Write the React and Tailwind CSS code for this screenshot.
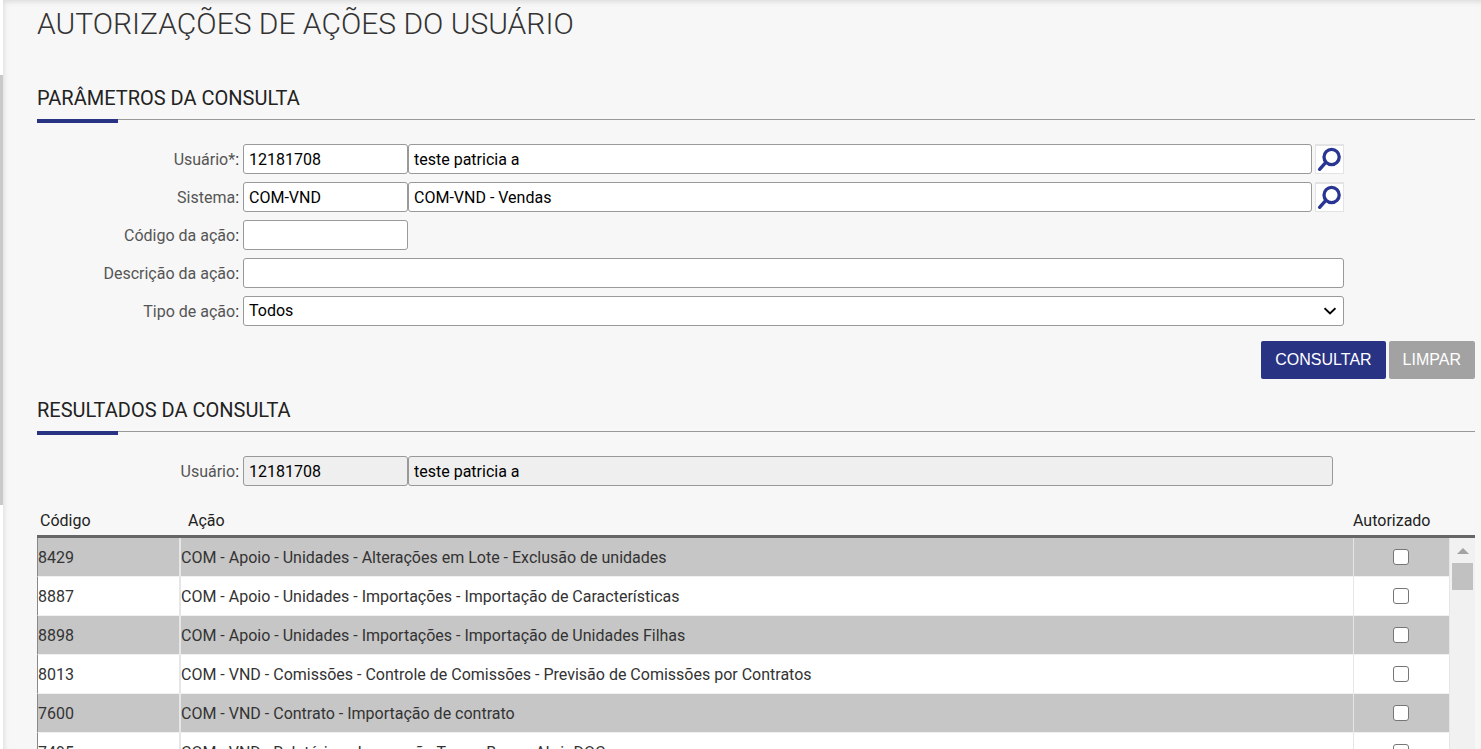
import { useState } from "react";

const INITIAL_QUERY = {
  userCode: "12181708",
  userName: "teste patricia a",
  systemCode: "COM-VND",
  systemName: "COM-VND - Vendas",
  actionCode: "",
  actionName: "",
  actionType: "Todos",
};

const EMPTY_QUERY = {
  userCode: "",
  userName: "",
  systemCode: "",
  systemName: "",
  actionCode: "",
  actionName: "",
  actionType: "Todos",
};

const ACTIONS = [
  { code: "8429", name: "COM - Apoio - Unidades - Alterações em Lote - Exclusão de unidades" },
  { code: "8887", name: "COM - Apoio - Unidades - Importações - Importação de Características" },
  { code: "8898", name: "COM - Apoio - Unidades - Importações - Importação de Unidades Filhas" },
  { code: "8013", name: "COM - VND - Comissões - Controle de Comissões - Previsão de Comissões por Contratos" },
  { code: "7600", name: "COM - VND - Contrato - Importação de contrato" },
  { code: "7495", name: "COM - VND - Relatórios - Impressão Termo Banco Abrir DOC" },
];

const inputClass =
  "h-[30px] min-w-0 rounded-[3px] border border-[#999] bg-white px-[5px] text-black outline-none focus:border-[#283384] disabled:bg-[#efefef]";

function SectionTitle({ children }) {
  return (
    <div className="border-b border-[#999]">
      <h2 className="text-xl leading-6 text-[#222]">{children}</h2>
      <div className="mt-[9px] -mb-1 h-1 w-[81px] bg-[#283384]" />
    </div>
  );
}

function FieldRow({ id, label, children }) {
  return (
    <div className="flex items-center">
      <label htmlFor={id} className="w-[202px] shrink-0 pt-[2px] text-right text-[#555]">
        {label}
        <span className="text-[#222]">:</span>
      </label>
      <div className="ml-1 flex min-w-0 flex-1">{children}</div>
    </div>
  );
}

function SearchButton({ label }) {
  return (
    <button
      type="button"
      aria-label={label}
      className="ml-[3px] flex h-[30px] w-[29px] shrink-0 items-center justify-center border border-t-2 border-[#e3e3e3] bg-white"
    >
      <svg width="25" height="25" viewBox="0 0 25 25" fill="none" stroke="#283593" strokeLinecap="round">
        <circle cx="14.6" cy="10" r="7.6" strokeWidth="3.3" />
        <path d="M8.6 15.7 L2.6 22.3" strokeWidth="3.4" />
      </svg>
    </button>
  );
}

export default function App() {
  const [query, setQuery] = useState(INITIAL_QUERY);
  const [authorized, setAuthorized] = useState([]);

  const bind = (field) => ({
    value: query[field],
    onChange: (e) => setQuery({ ...query, [field]: e.target.value }),
  });

  const toggle = (code) =>
    setAuthorized((list) => (list.includes(code) ? list.filter((c) => c !== code) : [...list, code]));

  return (
    <div className="flex h-screen overflow-hidden bg-white font-[Roboto,sans-serif] text-base leading-5">
      {/* Side menu scrollbar */}
      <div className="w-[3px] shrink-0 pt-[75px]">
        <div className="h-[430px] bg-[#c9c9c9]" />
      </div>

      <main className="min-w-0 flex-1 bg-[#f7f7f7] pl-[34px] pr-[6px] shadow-[inset_2px_3px_5px_-1px_#dcdcdc]">
        <h1 className="pt-1 text-3xl leading-10 font-light text-[#333]">AUTORIZAÇÕES DE AÇÕES DO USUÁRIO</h1>

        <form className="mt-[42px]" onSubmit={(e) => e.preventDefault()}>
          <SectionTitle>PARÂMETROS DA CONSULTA</SectionTitle>

          <div className="mt-6 mr-[131px] flex flex-col gap-2">
            <FieldRow id="userCode" label="Usuário*">
              <input id="userCode" type="text" className={`${inputClass} w-[165px]`} {...bind("userCode")} />
              <input aria-label="Nome do usuário" type="text" className={`${inputClass} flex-1`} {...bind("userName")} />
              <SearchButton label="Pesquisar usuário" />
            </FieldRow>
            <FieldRow id="systemCode" label="Sistema">
              <input id="systemCode" type="text" className={`${inputClass} w-[165px]`} {...bind("systemCode")} />
              <input aria-label="Nome do sistema" type="text" className={`${inputClass} flex-1`} {...bind("systemName")} />
              <SearchButton label="Pesquisar sistema" />
            </FieldRow>
            <FieldRow id="actionCode" label="Código da ação">
              <input id="actionCode" type="text" className={`${inputClass} w-[165px]`} {...bind("actionCode")} />
            </FieldRow>
            <FieldRow id="actionName" label="Descrição da ação">
              <input id="actionName" type="text" className={`${inputClass} flex-1`} {...bind("actionName")} />
            </FieldRow>
            <FieldRow id="actionType" label="Tipo de ação">
              <div className="relative flex-1">
                <select id="actionType" className={`${inputClass} block w-full appearance-none`} {...bind("actionType")}>
                  <option>Todos</option>
                  <option>Autorizados</option>
                  <option>Não autorizados</option>
                </select>
                <svg
                  className="pointer-events-none absolute top-[11px] right-2"
                  width="12"
                  height="9"
                  viewBox="0 0 12 9"
                  fill="none"
                  stroke="#000"
                  strokeWidth="2"
                >
                  <path d="M0.5 1.2 L6 6.4 L11.5 1.2" />
                </svg>
              </div>
            </FieldRow>
          </div>

          <div className="mt-[15px] flex justify-end gap-[3px] font-['Liberation_Sans',Arial,sans-serif] text-white">
            <button type="submit" className="h-[38px] rounded-[2px] bg-[#283384] px-[14px]">
              CONSULTAR
            </button>
            <button
              type="button"
              onClick={() => setQuery(EMPTY_QUERY)}
              className="h-[38px] rounded-[2px] bg-[#a2a2a2] px-[14px]"
            >
              LIMPAR
            </button>
          </div>
        </form>

        <section className="mt-[19px]">
          <SectionTitle>RESULTADOS DA CONSULTA</SectionTitle>

          <div className="mt-6 mr-[142px]">
            <FieldRow id="resultCode" label="Usuário">
              <input id="resultCode" type="text" disabled value="12181708" className={`${inputClass} w-[165px]`} />
              <input
                aria-label="Nome do usuário consultado"
                type="text"
                disabled
                value="teste patricia a"
                className={`${inputClass} flex-1`}
              />
            </FieldRow>
          </div>

          <div className="mt-[21px] flex">
            <table className="flex-1 table-fixed border-separate border-spacing-0 text-left text-[#333]">
              <colgroup>
                <col className="w-[144px]" />
                <col />
                <col className="w-[97px]" />
              </colgroup>
              <thead>
                <tr className="h-[31px] text-[#222]">
                  <th className="border-b-3 border-[#666] pl-[3px] font-normal">Código</th>
                  <th className="border-b-3 border-[#666] pl-[7px] font-normal">Ação</th>
                  <th className="border-b-3 border-[#666] font-normal">Autorizado</th>
                </tr>
              </thead>
              <tbody>
                {ACTIONS.map(({ code, name }) => (
                  <tr key={code} className="h-[39px] bg-white odd:bg-[#c6c6c6]">
                    <td className="border-r-2 border-b border-l border-r-[#e6e6e6] border-b-[#f0f0f0] border-l-[#888] pt-[2px]">
                      {code}
                    </td>
                    <td className="truncate border-b border-[#f0f0f0] pt-[2px]">{name}</td>
                    <td className="border-x border-b border-x-[#e6e6e6] border-b-[#f0f0f0] pr-[2px]">
                      <input
                        type="checkbox"
                        aria-label={`Autorizado ${code}`}
                        checked={authorized.includes(code)}
                        onChange={() => toggle(code)}
                        className="mx-auto block h-4 w-4 appearance-none rounded-[3px] border border-[#767676] bg-white checked:bg-[#283384]"
                      />
                    </td>
                  </tr>
                ))}
              </tbody>
            </table>

            {/* Scrollbar of the results list */}
            <div className="flex w-[25px] shrink-0 flex-col items-center bg-[#f1f1f1]">
              <div className="h-[31px] w-full border-b-3 border-[#666] bg-[#f7f7f7]" />
              <svg className="mt-[10px]" width="12" height="6" viewBox="0 0 12 6" fill="#a3a3a3">
                <path d="M0 6 L6 0 L12 6 Z" />
              </svg>
              <div className="mt-[9px] h-[27px] w-[21px] bg-[#c1c1c1]" />
            </div>
          </div>
        </section>
      </main>
    </div>
  );
}
